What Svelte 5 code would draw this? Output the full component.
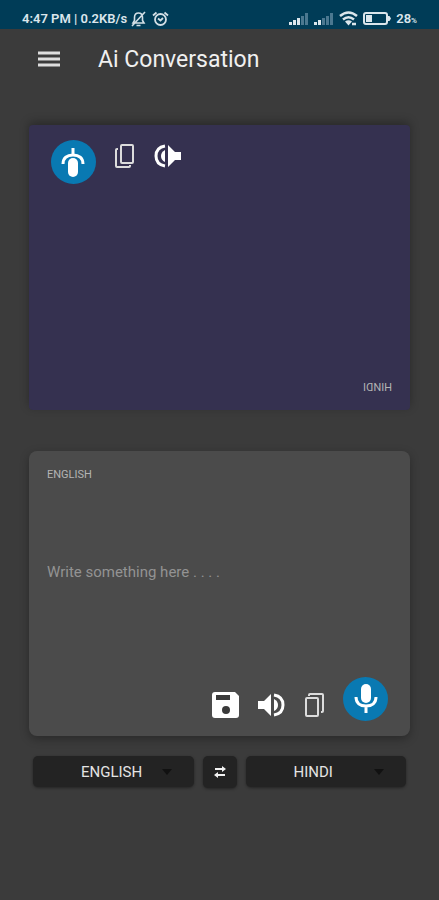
<script>
  let languages = ['ENGLISH', 'HINDI'];
  let from = 'ENGLISH';
  let to = 'HINDI';
  let message = '';

  function swap() {
    [from, to] = [to, from];
  }
</script>

<div class="app">
  <div class="status-bar">
    <span>4:47 PM | 0.2KB/s</span>
    <svg class="muted" width="15" height="16" viewBox="0 0 15 16" fill="none" stroke="#d3dfe6" stroke-width="1.6">
      <path d="M2 12h11L11.500 9.500V6.500C11.500 3.500 10 2 7.500 2S3.500 3.500 3.500 6.500V9.500zM5.500 14.500h4M1 15 14 1" />
    </svg>
    <svg width="17" height="16" viewBox="0 0 17 16" fill="none" stroke="#d3dfe6" stroke-width="1.8">
      <circle cx="8.500" cy="8.500" r="5.500" />
      <path d="M1 4.500 4.500 1.500M16 4.500l-3.500-3M6 7.500l2.500 2L11 7" />
    </svg>
    <div class="indicators">
      {#each [3, 2] as strength}
        <svg width="20" height="12" viewBox="0 0 20 12">
          {#each [3, 5, 7, 9, 12] as height, i}
            <rect x={i * 4} y={12 - height} width="3" {height} fill={i < strength ? '#dbe6ec' : '#4b7890'} />
          {/each}
        </svg>
      {/each}
      <svg width="19" height="15" viewBox="0 0 19 15" fill="none" stroke="#dbe6ec" stroke-width="2.5">
        <path d="M1 5Q9.500-2 18 5M4 8.500q5.500-4.500 11 0" />
        <path d="M6 10.500q3.500-2.500 7 0l-3.500 4z" fill="#dbe6ec" stroke="none" />
        <path d="M13 13h4" />
      </svg>
      <svg width="28" height="13" viewBox="0 0 28 13">
        <rect x="1" y="1" width="23" height="11" rx="2" fill="none" stroke="#dbe6ec" stroke-width="2" />
        <rect x="3" y="3" width="6" height="7" fill="#dbe6ec" />
        <path d="M25 4h1.500l1.500 2.500L26.500 9H25z" fill="#dbe6ec" />
      </svg>
      <span>28<small>%</small></span>
    </div>
  </div>

  <header>
    <button class="icon-btn" aria-label="Menu">
      <svg width="22" height="16" viewBox="0 0 22 16" fill="none" stroke="#dedede" stroke-width="3">
        <path d="M0 2h22M0 8h22M0 14h22" />
      </svg>
    </button>
    <h1>Ai Conversation</h1>
  </header>

  <main>
    <!-- faces the person on the other side of the phone -->
    <section class="card translated">
      <div class="label">{to}</div>
      <div class="output"></div>
      <div class="tools">
        {@render speaker()}
        {@render copy()}
        {@render mic()}
      </div>
    </section>

    <section class="card">
      <label class="label" for="message">{from}</label>
      <textarea id="message" bind:value={message} placeholder="Write something here . . . ."></textarea>
      <div class="tools">
        <button class="icon-btn" aria-label="Save">
          <svg width="27" height="26" viewBox="0 0 27 26">
            <path d="M3 0h20l4 4v19a3 3 0 0 1-3 3H3a3 3 0 0 1-3-3V3a3 3 0 0 1 3-3z" fill="#fff" />
            <path d="M4 3h14v5H4z" fill="#3a3a3a" />
            <circle cx="14" cy="18" r="4" fill="#3a3a3a" />
          </svg>
        </button>
        {@render speaker()}
        {@render copy()}
        {@render mic()}
      </div>
    </section>

    <div class="languages">
      <div class="select">
        <select bind:value={from} aria-label="Translate from">
          {#each languages as language}
            <option>{language}</option>
          {/each}
        </select>
        {@render caret()}
      </div>
      <button class="swap" aria-label="Swap languages" on:click={swap}>
        <svg width="12" height="12" viewBox="0 0 12 12">
          <path d="M1 3h8M3 9h8" fill="none" stroke="#f2f2f2" stroke-width="2" />
          <path d="M8 0l4 3-4 3zM4 6 0 9l4 3z" fill="#f2f2f2" />
        </svg>
      </button>
      <div class="select">
        <select bind:value={to} aria-label="Translate to">
          {#each languages as language}
            <option>{language}</option>
          {/each}
        </select>
        {@render caret()}
      </div>
    </div>
  </main>
</div>

{#snippet speaker()}
  <button class="icon-btn" aria-label="Speak">
    <svg width="27" height="24" viewBox="0 0 27 24">
      <path d="M0 8h6l7-7v22l-7-7H0z" fill="#fff" />
      <path d="M16 6q4 2 4 6t-4 6z" fill="#fff" />
      <path d="M16 2c6 1 9 5 9 10s-3 9-9 10" fill="none" stroke="#fff" stroke-width="3" />
    </svg>
  </button>
{/snippet}

{#snippet copy()}
  <button class="icon-btn" aria-label="Copy">
    <svg width="20" height="24" viewBox="0 0 20 24" fill="none" stroke="#dcdcdc" stroke-width="2">
      <rect x="2" y="5" width="12" height="18" rx="1" />
      <path d="M5 3V2q0-1 1-1h12q1 0 1 1v16q0 1-1 1h-1" />
    </svg>
  </button>
{/snippet}

{#snippet mic()}
  <button class="mic" aria-label="Record">
    <svg width="24" height="30" viewBox="0 0 24 30">
      <rect x="7" y="0" width="10" height="19" rx="5" fill="#fff" />
      <path d="M2 13c0 6 4 9 10 9s10-3 10-9M12 22v7" fill="none" stroke="#fff" stroke-width="3" />
    </svg>
  </button>
{/snippet}

{#snippet caret()}
  <svg class="caret" width="10" height="6" viewBox="0 0 10 6">
    <path d="M0 0h10L5 6z" fill="#111" />
  </svg>
{/snippet}

<style>
  :global(body) {
    background: #3b3b3b;
  }

  .app {
    min-height: 100vh;
    background: #3b3b3b;
    color: #f0f0f0;
    font-family: Roboto, sans-serif;
  }

  svg {
    display: block;
  }

  button {
    border: none;
    cursor: pointer;
  }

  .icon-btn {
    padding: 0;
    background: none;
  }

  .status-bar {
    display: flex;
    align-items: center;
    gap: 4px;
    height: 21px;
    padding: 8px 22px 0;
    background: #003c57;
    color: #dbe6ec;
    font-size: 13px;
    font-weight: 600;
  }

  .muted {
    margin-right: 2px;
  }

  .indicators {
    display: flex;
    align-items: center;
    gap: 5px;
    margin-left: auto;
  }

  .indicators small {
    font-size: 8px;
  }

  header {
    display: flex;
    align-items: center;
    gap: 38px;
    height: 60px;
    padding: 0 38px;
  }

  h1 {
    margin: 0;
    font-size: 23px;
    font-weight: 400;
  }

  main {
    padding: 36px 29px;
  }

  .card {
    display: flex;
    flex-direction: column;
    box-sizing: border-box;
    min-height: 285px;
    margin-bottom: 41px;
    padding: 16px 22px 15px 18px;
    border-radius: 8px;
    background: #4b4b4b;
    box-shadow: 0 3px 10px rgba(0, 0, 0, 0.3);
  }

  .card + .languages {
    margin-top: -21px;
  }

  .translated {
    background: #353150;
    border-radius: 4px;
    transform: rotate(180deg);
  }

  .label {
    color: #b4b4b4;
    font-size: 11px;
    line-height: 16px;
  }

  .output,
  textarea {
    flex: 1;
  }

  textarea {
    padding: 79px 0 0;
    border: none;
    outline: none;
    resize: none;
    background: none;
    color: #f0f0f0;
    font-family: inherit;
    font-size: 15px;
    line-height: 20px;
  }

  textarea::placeholder {
    color: #939393;
    opacity: 1;
  }

  .tools {
    display: flex;
    align-items: center;
    justify-content: flex-end;
    gap: 19px;
  }

  .tools .icon-btn {
    padding-top: 11px;
  }

  .mic {
    display: grid;
    place-items: center;
    width: 45px;
    height: 44px;
    padding: 0;
    border-radius: 50%;
    background: #0979b2;
  }

  .languages {
    display: flex;
    align-items: flex-start;
    gap: 9px;
    padding: 0 4px;
  }

  .select {
    position: relative;
    flex: 1;
  }

  select {
    width: 100%;
    height: 31px;
    padding: 0 32px 0 48px;
    border: none;
    border-radius: 5px;
    appearance: none;
    background: #232323;
    box-shadow: 0 1px 3px rgba(0, 0, 0, 0.4);
    color: #e4e4e4;
    font-family: inherit;
    font-size: 15px;
  }

  .caret {
    position: absolute;
    top: 13px;
    right: 22px;
    pointer-events: none;
  }

  .swap {
    display: grid;
    place-items: center;
    width: 34px;
    height: 32px;
    padding: 0;
    border-radius: 5px;
    background: #232323;
    box-shadow: 0 1px 3px rgba(0, 0, 0, 0.4);
  }
</style>
